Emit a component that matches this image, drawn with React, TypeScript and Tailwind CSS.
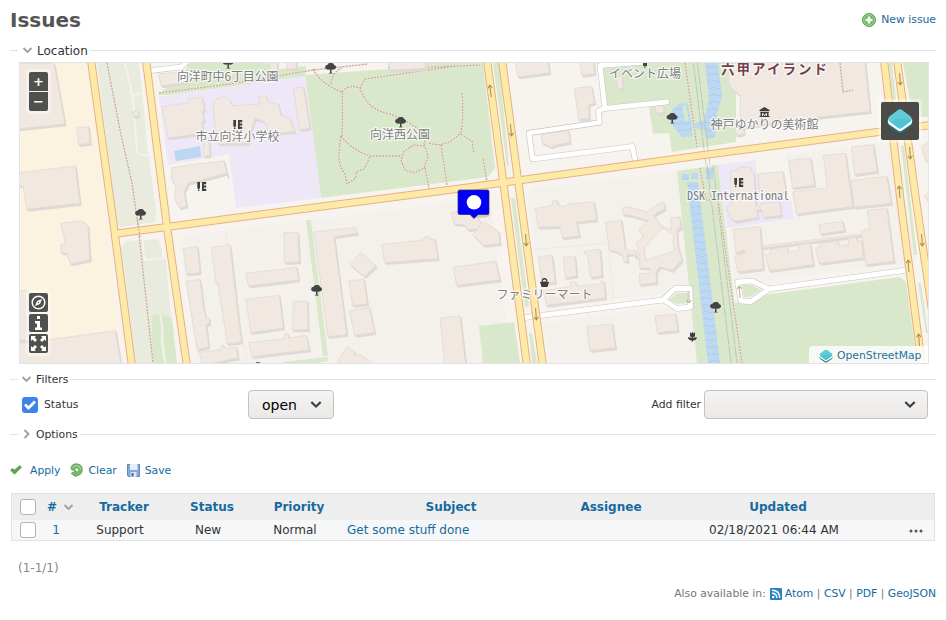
import React from 'react';

type Pt = [number, number];
type TileProps = { x: number; y: number; children: React.ReactNode };

/* Map sheets are drawn on a grid three times finer than the page. */
const Sheet = ({ x, y, children }: TileProps) => (
  <g transform={`translate(${x} ${y}) scale(.333333)`}>{children}</g>
);

const Bld = ({ d }: { d: string }) => (
  <g strokeLinejoin="round">
    <polygon points={d} transform="translate(5 7)" fill="#dfdad5" />
    <polygon points={d} transform="translate(2.5 3.5)" fill="#dfdad5" stroke="#dfdad5" strokeWidth="3" />
    <polygon points={d} fill="#f1e8e2" stroke="#ded7d1" strokeWidth="2" />
  </g>
);

const sheets: { x: number; y: number; b: string[] }[] = [
  {
    x: 0, y: 0, b: [
      '40,190 162,190 195,372 40,388',
      '230,384 266,380 270,430 236,434',
      '40,520 226,498 240,610 80,628 70,560 40,550',
      '398,336 413,332 417,348 402,350',
      '475,222 560,214 566,246 484,258',
      '486,320 566,308 566,296 606,292 614,330 606,335 612,360 606,368 610,400 504,414',
      '610,420 626,420 630,466 612,470',
      '515,502 672,482 684,532 678,520 590,544 566,548 552,576 560,618 540,624 524,598 528,560 515,540',
      '640,310 650,296 672,290 690,300 698,318 780,312 775,290 797,287 804,305 835,312 842,344 870,356 884,395 804,402 800,372 786,362 765,356 756,380 745,430 656,432 642,360',
    ],
  },
  {
    x: 230, y: 55, b: [
      '118,18 140,18 144,44 120,50',
      '168,18 198,18 198,40 172,42',
      '190,100 220,96 240,220 208,224',
      '474,18 586,14 586,40 480,46',
    ],
  },
  {
    x: 460, y: 55, b: [
      '165,18 264,18 268,54 174,66',
      '358,18 400,18 404,56 366,62',
      '343,100 394,94 404,144 386,150 388,190 356,194',
      '244,238 326,226 330,262 290,270 272,276 246,264',
      '468,66 486,62 490,98 474,102',
      '585,153 610,153 612,170 600,176 588,170',
    ],
  },
  {
    x: 690, y: 0, b: [
      '120,190 524,180 540,335 380,352 160,382 162,402 138,406 150,360 152,290 122,262 114,240',
      '297,482 362,474 374,556 308,564',
      '400,466 466,460 488,620 320,642 308,576 412,564',
      '485,440 550,434 562,514 494,524',
      '484,542 590,528 604,610 492,622',
      '203,522 278,514 288,576 210,584',
      '120,514 145,510 148,502 180,502 184,514 192,520 198,618 212,616 212,610 268,606 274,646 220,652 214,628 200,630 204,652 136,664 120,654 110,622 126,610',
      '694,440 712,428 740,428 740,510 706,480',
      '704,588 716,576 716,600 710,600',
    ],
  },
  {
    x: 0, y: 210, b: [
      '182,40 246,32 264,48 270,150 212,162 200,130 184,128 182,104 196,100',
      '40,246 80,240 88,250 88,392 40,390',
      '40,404 346,362 364,470 40,470',
      '550,116 592,110 600,188 560,192',
      '558,214 600,208 612,300 618,324 628,326 628,340 618,344 626,410 592,420',
      '634,112 690,104 716,330 724,396 682,402 654,222 648,218',
      '598,428 662,418 668,404 678,416 710,412 714,444 606,466',
    ],
  },
  {
    x: 230, y: 210, b: [
      '162,68 204,68 208,156 164,158',
      '46,190 200,172 206,210 56,228',
      '48,268 148,256 160,354 62,368',
      '190,274 232,274 234,360 188,360',
      '57,398 162,386 164,372 174,372 176,384 228,376 238,420 66,440',
      '252,66 374,52 382,70 312,80 350,374 294,380',
      '392,128 438,166 404,200 360,164',
      '356,212 402,208 412,282 368,286',
      '358,302 418,292 434,368 374,376',
      '455,104 580,90 584,80 598,80 600,88 614,88 624,146 464,158',
      '352,410 374,424 372,434 382,438 388,432 424,458 400,480 340,480 324,450',
      '630,324 690,318 708,470 645,470',
      '664,8 700,0 744,24 760,54 714,60 700,44 672,42',
    ],
  },
  {
    x: 460, y: 180, b: [
      '38,164 70,124 116,154 120,192 70,196',
      '-20,262 106,244 120,300 -10,316',
      '226,86 276,76 278,62 292,62 294,76 316,80 322,72 402,66 410,120 350,126 358,168 308,174 300,140 234,142',
      '436,126 484,120 496,208 510,212 526,210 530,236 518,222 500,224 504,244 492,244 488,226 468,214 448,210',
      '487,84 505,80 560,96 596,70 612,68 614,86 580,106 606,140 634,148 632,114 658,110 664,142 650,150 654,202 666,240 636,272 600,260 588,276 590,308 540,314 538,282 570,278 568,264 540,264 536,220 530,188 550,170 536,148 566,122 510,106 490,104',
      '235,230 276,226 286,308 246,310',
      '310,232 344,228 350,288 316,294',
      '370,214 420,208 426,288 392,292 382,226',
      '250,332 330,320 332,306 346,306 350,318 418,312 422,304 432,304 436,354 260,376',
      '380,440 456,432 466,504 390,512',
      '585,408 646,402 654,452 592,458',
    ],
  },
  {
    x: 690, y: 200, b: [
      '130,88 210,80 220,206 144,216 134,168 166,160 162,150 138,158',
      '216,138 510,102 510,108 216,144',
      '226,164 240,162 242,148 290,140 294,156 326,152 326,134 360,130 370,194 238,212',
      '376,144 390,142 388,132 442,122 446,136 476,134 474,114 498,110 502,124 516,122 520,174 388,190',
      '386,74 458,64 464,92 392,102',
      '532,32 590,24 612,184 528,194 514,92 540,86',
    ],
  },
];

const blocks = [
  '180,241 186,235 482,199 491,206 512,363 197,363',
  '527,197 532,188 676,172 692,290 545,308',
  '543,323 690,304 700,363 550,363',
  '730,228 797,220 905,195 916,262 740,284 734,282',
  '787,156 897,140 907,210 795,222',
];

const parks = [
  '158,95 167,87 187,68 187,63 272,63 272,70 306,66 306,76 168,95',
  '305,75 388,69 388,63 483,63 495,168 488,177 321,198',
  '603,67 608,63 736,63 736,142 672,152 669,133 653,134 649,107 606,107',
  '677,171 718,165 742,363 697,363',
  '735,303 763,295 900,277 906,282 917,363 740,363',
  '903,63 928,63 928,117 913,117',
  '479,326 514,322 520,363 483,363',
  '493,63 499,63 509,166 507,166',
  '511,198 515,198 529,307 525,307',
  '529,333 532,333 537,363 532,363',
  '889,63 892,63 896,100 893,100',
  '901,146 904,146 917,255 914,255',
  '918,283 921,283 928,333 926,333',
  '306,220 311,220 328,356 323,356',
  '283,362 328,357 328,361 315,363 283,363',
  '152,315 160,314 172,318 177,363 152,363',
];

const greys = [
  '97,63 139,63 148,152 156,209 155,222 121,227 117,223',
  '121,247 126,241 158,239 162,249 162,257 166,260 171,316 176,363 136,363',
];

const mainRoads = [
  'M91 60L113 220L132 366',
  'M146 60L167 227L187 366',
  'M117 233.5L167 227L230 218.5L460 188.5L700 155.5L930 125',
  'M487 60L503 180L527 366',
  'M502 60L518 180L543 366',
  'M884 60L901 205L922 366',
  'M897 60L916 200L932 310',
];

const smallRoads = [
  'M150 70.7L181 67L187 62',
  'M645 62L600 65.5L605 108.5',
  'M667 102L604 108.5L598.5 111L599.5 122.5L529 133L532.5 159L632.5 146.5L635.5 162',
  'M525 317.5L663 300L675 288.5L690 288.5L690.5 307L677 308.5L663.5 300',
  'M907.5 270L769 289L752 281L737.5 282L741 301L751 301.5L769 289',
];

const paths = [
  'M107 63L120 130L132 183L138 225L153 363',
  'M159 93L230 84L313 70L368 64',
  'M313 69Q321 84 342 92Q343 108 342 136',
  'M331 84Q332 72 342 68',
  'M342 92Q348 84 360 88Q367 110 390 114Q409 121 429 137Q422 142 425 146',
  'M360 88L365 79L456 66',
  'M341 136C339 153 336 162 345 174L347 184L356 178L356 172L364 169L370 157',
  'M341 136Q353 151 371 156L401 156',
  'M425 146L414 145L404 151L401 160L405 170L414 173L424 168L428 157L425 146',
  'M425 168L429 188',
  'M429 143Q447 149 461 132Q464 116 462 92',
  'M441 145L447 185',
  'M461 134L472 141L474 154',
  'M483 159L487 182',
  'M389 63L389 69L480 65',
  'M685 63L697 147',
  'M700 168L706 200L718 200L742 363',
  'M840 63L843 92L853 90',
];

const Tree = ({ x, y }: { x: number; y: number }) => (
  <g transform={`translate(${x} ${y})`} fill="#444">
    <path d="M-5.5 -.5Q-5.5 -3-3 -3.2Q-2 -5.5 .5 -5Q3 -5.4 3.7 -3Q6 -2.4 5.5 0Q4 2.3 1 1.6L1 4.5L2.5 5.5H-2L-.5 4.5V1.6Q-4.5 2.2-5.5 -.5Z" />
  </g>
);

const School = ({ x, y }: { x: number; y: number }) => (
  <g transform={`translate(${x} ${y})`} fill="#3d3d3d">
    <path d="M.3 0h2.7v5.300L2.500 7H.8L.3 5.300zM1 7.600h1.400V9H1zM5 0h4.200v2.200H6.800v1.200h2.400v2H6.800v1.300h2.400V9H5z" />
  </g>
);

const Arrow = ({ x, y, r }: { x: number; y: number; r: number }) => (
  <path transform={`translate(${x} ${y}) rotate(${r})`} d="M0 -6V6M-2.2 3L0 6L2.2 3" fill="none" stroke="#a08c58" strokeWidth="1" />
);

const Label = ({ x, y, w, children }: { x: number; y: number; w: number; children: string }) => (
  <text x={x} y={y} textLength={w} fontSize="12" className="font-['Noto_Sans_CJK_JP',sans-serif]" fill="#7d7d7d" stroke="#fff" strokeOpacity=".75" strokeWidth="2.4" strokeLinejoin="round" paintOrder="stroke">
    {children}
  </text>
);

function MapCanvas() {
  const ties: Pt[] = [[693, 60], [697, 60], [711, 200], [717, 200]];
  return (
    <svg width="908" height="300" viewBox="20 63 908 300" className="block">
      <defs>
        <pattern id="waves" width="8" height="7" patternUnits="userSpaceOnUse">
          <rect width="8" height="7" fill="#bdd8f1" />
          <path d="M0 4Q2 2 4 4T8 4" fill="none" stroke="#a9c9e9" strokeWidth=".8" />
        </pattern>
      </defs>
      <rect x="20" y="63" width="908" height="300" fill="#f7f4ef" />
      <polygon points="20,63 87,63 108,225 122,363 20,363" fill="#fbf3e0" />
      {blocks.map((p) => <polygon key={p} points={p} fill="#f4f1ed" />)}
      {greys.map((p) => <polygon key={p} points={p} fill="#e9ebdf" />)}
      {parks.map((p) => <polygon key={p} points={p} fill="#d9e8ca" />)}
      <polygon points="159,97 305,76 321,198 236,208 229,154 213,157 168,165" fill="#eee7f8" />
      <polygon points="718,165 755,160 760,190 791,200 794,219 727,228" fill="#eee7f8" />
      <polygon points="174,151 200,146 201,157 176,161" fill="#bcd7f0" />
      <path d="M125 63L133 98M131 97L141 93M133 98L137 151Q139 156 149 155M160 315Q163 325 162 340L165 363M143 226L143 250L145 260L164 258" fill="none" stroke="#f4f2ea" strokeWidth="2" />
      <path d="M226 232L232 290L248 363M529 250L608 243L614 300M787 156L800 220" fill="none" stroke="#edeae5" strokeWidth="1" />
      <g fill="url(#waves)">
        <polygon points="672,110 680,103 688,104 692,125 692,136 682,137 674,127 669,119" />
        <polygon points="705,63 718,63 722,96 716,117 715,137 706,139 705,130 695,128 695,124 704,120 709,99" />
        <polygon points="687,182 698,182 720,363 708,363" />
        <path d="M682 174h7v6h-7zM691 173h7v6h-7zM706 168h7v11h-7z" />
      </g>
      <path d="M684 106L687 121" stroke="#d9e8ca" strokeWidth="4" />
      {ties.map(([x, y], i) => (
        <path key={i} d={y < 100 ? `M${x} 60L${x + 13} 165` : `M${x - 4} 165L${x + 20} 363`} stroke="#b9bdb3" strokeWidth=".8" strokeDasharray="12 1" fill="none" />
      ))}
      <g fill="none" strokeLinejoin="round">
        {paths.map((d) => <path key={d} d={d} stroke="#f0ebe0" strokeOpacity=".65" strokeWidth="2.2" />)}
        {paths.map((d) => <path key={d} d={d} stroke="#c9a899" strokeWidth="1.3" strokeDasharray="2 1.2" />)}
      </g>
      {sheets.map((s) => (
        <Sheet key={`${s.x}-${s.y}`} x={s.x} y={s.y}>{s.b.map((d) => <Bld key={d} d={d} />)}</Sheet>
      ))}
      <polygon points="644,248 663,228 673,234 674,251 646,260" fill="#f4f1ed" stroke="#ded7d1" strokeWidth=".7" />
      <path d="M840 63L843 92L853 90" fill="none" stroke="#c9a899" strokeWidth="1.3" strokeDasharray="2 1.2" />
      <polygon points="669,300 677,293 687,293 688,303 678,304" fill="#d9e8ca" />
      <polygon points="742,285 752,285 761,290 750,297 744,297" fill="#d9e8ca" />
      <g fill="none" strokeLinejoin="round">
        {smallRoads.map((d) => <path key={d} d={d} stroke="#c9c6c2" strokeWidth="6" strokeLinecap="round" />)}
        {smallRoads.map((d) => <path key={d} d={d} stroke="#fff" strokeWidth="4.8" strokeLinecap="round" />)}
        {mainRoads.map((d) => <path key={d} d={d} stroke="#e7b083" strokeWidth="8.2" />)}
        {mainRoads.map((d) => <path key={d} d={d} stroke="#feeaa8" strokeWidth="6.2" />)}
      </g>
      <path d="M137.5 219L140 238" stroke="#cfab9a" strokeWidth="1.1" strokeDasharray="2 1.3" />
      <Arrow x={490.5} y={91} r={173} /><Arrow x={511} y={130} r={-6} />
      <Arrow x={526} y={240} r={-4} /><Arrow x={536} y={314} r={-4} />
      <Arrow x={900} y={79} r={-4} /><Arrow x={910} y={153} r={-4} />
      <Arrow x={899.5} y={192} r={176} /><Arrow x={922} y={240} r={-4} />
      <Arrow x={908.5} y={266} r={176} /><Arrow x={919} y={340} r={176} />
      <g opacity=".7"><Arrow x={689} y={297} r={0} /><Arrow x={739.5} y={292} r={174} /></g>
      <Tree x={140.5} y={214} /><Tree x={228} y={63} /><Tree x={330.5} y={68} /><Tree x={400.5} y={122} />
      <Tree x={672} y={118} /><Tree x={316.5} y={290} /><Tree x={715.5} y={307} />
      <path d="M643 63h4v3h-1.5v2h-1v-2H643zM256 362.3h4v1h-4z" fill="#444" />
      <School x={233} y={120} /><School x={197} y={182} /><School x={734} y={178} />
      <path d="M540 282h1.500q0-4 3-4t3 4h1.500v1.200h-.6l-.8 3.800h-6.200l-.8-3.800h-.6zM542.500 281.500h4q-.4-2.100-2-2.100t-2 2.100z" fill="#3d3d3d" />
      <path d="M764.500 107L769.500 110V111H759.500V110ZM760 111.800H769V112.600H760ZM760.500 112.600H768.500V116H769.500V117H759.500V116H760.500ZM762 116H763V114.600L764.500 116L766 114.600V116H767V113.300H766L764.500 114.700L763 113.300H762Z" fillRule="evenodd" fill="#3d3d3d" />
      <path d="M690 332l1.200 1.500L692.500 332l1.300 1.500L695 332v3.500q0 1.500-1.800 1.800v1q1.500-1.600 3.800-.8q-.8 3-3.800 2.800V341.500h-1.600v-1.200q-3 .2-3.800-2.800q2.300-.8 3.800.8v-1Q690 337 690 335.500z" fill="#3d3d3d" />
      <Label x={177} y={80.5} w={101.500}>向洋町中6丁目公園</Label>
      <Label x={195.5} y={141} w={84}>市立向洋小学校</Label>
      <Label x={370} y={138.5} w={60}>向洋西公園</Label>
      <Label x={609} y={78} w={72}>イベント広場</Label>
      <Label x={710.5} y={129} w={108}>神戸ゆかりの美術館</Label>
      <Label x={496.5} y={299} w={96}>ファミリーマート</Label>
      <text x="687" y="199.500" textLength="102" lengthAdjust="spacingAndGlyphs" fontSize="12" className="font-['Noto_Sans_Mono_CJK_JP','DejaVu_Sans_Mono',monospace]" fill="#7d7d7d" stroke="#fff" strokeOpacity=".75" strokeWidth="2.4" paintOrder="stroke">DSK International</text>
      <text x="721" y="74" textLength="106" fontSize="13.500" fontWeight="700" className="font-['Noto_Sans_CJK_JP',sans-serif]" fill="#71404c" stroke="#fff" strokeOpacity=".75" strokeWidth="2.400" paintOrder="stroke">六甲アイランド</text>
      <ellipse cx="481" cy="215" rx="9" ry="3" fill="#000" opacity=".15" />
      <path d="M460 190H487.500Q489 190 489 191.500V213Q489 214.500 487.500 214.500H478L474 218.500L470 214.500H460Q458 214.500 458 213V191.500Q458 190 460 190Z" fill="#0000fa" stroke="#28285a" strokeWidth=".7" />
      <circle cx="474" cy="202.300" r="7.300" fill="#fff" />
    </svg>
  );
}

const Layers = ({ size }: { size: number }) => (
  <svg width={size} height={size} viewBox="0 0 26 26">
    <path d="M1 14Q0 17 3 19L11 24.5Q13 26 15 24.5L23 19Q26 17 25 14Z" fill="#247181" />
    <path d="M1 11Q0 15 3 17L11 22.5Q13 24 15 22.5L23 17Q26 15 25 11Z" fill="#fff" />
    <path d="M11 2Q13 .5 15 2L23.5 8.5Q26 11 23.5 13.5L15 20Q13 21.5 11 20L2.500 13.500Q0 11 2.500 8.500Z" fill="#50c3d3" />
    <path d="M11 2Q13 .5 15 2L23.5 8.5Q25 10 24 12Q14 8 3 14Q0 11 2.500 8.500Z" fill="#73d1dd" opacity=".55" />
  </svg>
);

const Chevron = ({ right, dark }: { right?: boolean; dark?: boolean }) => (
  <svg width="12" height="12" viewBox="0 0 12 12" fill="none" stroke={dark ? '#3a3f42' : '#a0a0a0'} strokeWidth={dark ? 2.2 : 1.9}>
    <path d={right ? 'M3.500 2L7.500 6L3.500 10' : dark ? 'M1.300 3L6 7.500L10.700 3' : 'M1.500 4L5.500 8L9.500 4'} />
  </svg>
);

const Legend = ({ text, right, big }: { text: string; right?: boolean; big?: boolean }) => (
  <div className="flex h-5 items-center">
    <span className="h-px w-2 bg-[#e0e2e3]" />
    <span className={big ? 'ml-[3.5px] flex' : 'ml-[3px] flex'}><Chevron right={right} /></span>
    <span className={big ? 'ml-[3.5px] mr-[2px] pt-px text-[12px]' : 'ml-[3px] mr-[2px] pt-[2px] text-[10.8px]'}>{text}</span>
    <span className="h-px flex-1 bg-[#e0e2e3]" />
  </div>
);

const ctl = 'flex w-[19px] items-center justify-center bg-[#50504c] text-white';
const link = 'text-[#156a9f]';
const cols = 'grid grid-cols-[32px_35px_90px_86px_88px_216px_104px_230px_1fr] items-center';
const selectBox = 'flex h-[29px] items-center rounded-[4px] border border-[#c5c1bc] bg-linear-to-b from-[#f5f4f3] to-[#ebe9e7]';

const Box = () => <span className="ml-2 block h-4 w-4 rounded-[3px] border border-[#b8b0a6] bg-white" />;

export default function App() {
  return (
    <div className="flex h-[620px] w-[947px] flex-col border-r border-[#dddddd] bg-white pl-[10px] pr-[10px] font-['DejaVu_Sans',sans-serif] text-[12px] leading-none text-[#333]">
      <header className="flex h-10 items-center justify-between">
        <h2 className="text-[20px] font-bold text-[#555]">Issues</h2>
        <a className={`flex items-center gap-[5px] text-[10.8px] ${link}`}>
          <svg width="14" height="14" viewBox="0 0 14 14">
            <circle cx="7" cy="7" r="6.500" fill="#69b55a" stroke="#438b3d" strokeWidth=".8" />
            <circle cx="7" cy="7" r="5.300" fill="none" stroke="#b8dfa9" strokeWidth=".8" />
            <path d="M5.700 3.500h2.600v2.200h2.200v2.600H8.300v2.200H5.700V8.300H3.500V5.700h2.200z" fill="#fff" />
          </svg>
          New issue
        </a>
      </header>
      <Legend text="Location" big />
      <div className="relative ml-[9px] mt-[2px] h-[302px] w-[910px] border border-[#e0e2e3]">
        <MapCanvas />
        <div className="absolute left-[6px] top-[6px] flex flex-col gap-px rounded-[4px] bg-white/40 p-[3px]">
          <span className={`${ctl} h-[19px] rounded-t-[2px] text-[13px] font-bold`}>+</span>
          <span className={`${ctl} h-[19px] rounded-b-[2px] text-[13px] font-bold`}>−</span>
        </div>
        <div className="absolute bottom-[7px] left-[6px] flex flex-col gap-[2px] rounded-[4px] bg-white/40 p-[3px]">
          <span className={`${ctl} h-[19px] rounded-[2px]`}>
            <svg width="15" height="15" viewBox="0 0 15 15"><circle cx="7.500" cy="7.500" r="6.300" fill="none" stroke="#fff" strokeWidth="1.500" /><path d="M11 4L9 9L4 11L6 6ZM6.700 7.500L7.500 8.300L8.300 7.500L7.500 6.700Z" fillRule="evenodd" fill="#fff" /></svg>
          </span>
          <span className={`${ctl} h-[18px] rounded-[2px]`}>
            <svg width="9" height="14" viewBox="0 0 9 14"><path d="M3 0h3v3H3zM1 5h5v6.500h2V14H1v-2.500h2v-4H1z" fill="#fff" /></svg>
          </span>
          <span className={`${ctl} h-[19px] rounded-[2px]`}>
            <svg width="15" height="15" viewBox="0 0 15 15" fill="#fff"><path d="M0 0h5L3.600 1.500L6 4L4 6L1.500 3.600L0 5zM15 0v5l-1.500-1.400L11 6L9 4l2.500-2.500L10 0zM0 15v-5l1.500 1.400L4 9l2 2l-2.500 2.500L5 15zM15 15h-5l1.500-1.400L9 11l2-2l2.500 2.500L15 10z" /></svg>
          </span>
        </div>
        <div className="absolute right-[6px] top-[36px] rounded-[4px] bg-white/40 p-[3px]">
          <div className="flex h-[38px] w-[38px] items-center justify-center rounded-[2px] bg-[#4a4a47]"><Layers size={26} /></div>
        </div>
        <div className="absolute bottom-0 right-0 flex h-[17px] w-[119px] items-center gap-[4px] rounded-tl-[4px] bg-white/80 pl-[10px] pt-[3px] text-[10.8px] text-[#2a6f9e]">
          <Layers size={14} /><span className="pt-px">OpenStreetMap</span>
        </div>
      </div>
      <div className="mt-[5px]"><Legend text="Filters" /></div>
      <div className="mt-[1px] flex h-[29px] items-center text-[10.8px]">
        <span className="ml-3 flex h-4 w-4 items-center justify-center rounded-[3px] bg-[#3d86e6]">
          <svg width="12" height="10" viewBox="0 0 12 10" fill="none" stroke="#fff" strokeWidth="2.800"><path d="M1 4.500L4.500 8L11 1.500" /></svg>
        </span>
        <span className="ml-[6px] w-[204px] pt-px">Status</span>
        <span className={`${selectBox} w-[86px] justify-between pl-[13px] pr-[11px] text-[14px] text-black`}>open<Chevron dark /></span>
        <span className="ml-auto mr-[3px] pt-px">Add filter</span>
        <span className={`${selectBox} mr-2 w-[224px] justify-end pr-[11px]`}><Chevron dark /></span>
      </div>
      <div className="mt-[5px]"><Legend text="Options" right /></div>
      <div className={`mt-[16px] flex h-5 items-center text-[10.8px] ${link}`}>
        <svg width="12" height="10" viewBox="0 0 12 10"><path d="M.5 5L2.500 3.500L4.500 5L9.500 .8L11.500 2.300L4.500 9.300Z" fill="#58aa4c" stroke="#3f8f3a" strokeWidth=".6" /></svg>
        <span className="ml-2 pt-[2px]">Apply</span>
        <svg className="ml-[10px]" width="13" height="14" viewBox="0 0 13 14"><path d="M1 5.300Q1.300 .8 6.500 .8Q12.400 1.200 12.300 7Q12 12.300 6 12.700V13.700L1.200 10.500L6 7.600V9.200Q8.800 9 8.800 6.800Q8.700 4.900 6.500 4.800Q4.700 5 4.600 7.200H2.800Q1 7 1 5.300Z" fill="#7dbb70" stroke="#468b40" strokeWidth=".7" /><path d="M3 4.500Q4 2.200 7 2.500Q10.500 3 10.700 6.500" fill="none" stroke="#b4dba9" strokeWidth=".9" /></svg>
        <span className="ml-[5px] pt-[2px]">Clear</span>
        <svg className="ml-[10px]" width="13" height="13" viewBox="0 0 13 13"><path d="M.5 .5h12v12h-11l-1-1z" fill="#83a9da" stroke="#6088c0" /><path d="M3 0h7.500v6H3z" fill="#e7eef7" /><path d="M3.500 8h6v5h-6z" fill="#dce4ee" /><path d="M4.500 9h2v3.500h-2z" fill="#426ca5" /></svg>
        <span className="ml-[5px] pt-[2px]">Save</span>
      </div>
      <div className="ml-[1px] mt-[13px] h-[48px] w-[924px] border border-[#dfe1e2]">
        <div className={`${cols} h-[26px] bg-[#eeeeee] text-center font-bold ${link}`}>
          <Box />
          <span className="flex items-center gap-[6px] pl-[3px]">#<Chevron /></span>
          <span>Tracker</span><span>Status</span><span>Priority</span><span>Subject</span><span>Assignee</span><span>Updated</span>
        </div>
        <div className={`${cols} h-5 bg-[#f6f7f9] text-center`}>
          <Box />
          <span className={`pr-[11px] ${link}`}>1</span>
          <span className="pr-2">Support</span><span className="pr-2">New</span><span className="pr-2">Normal</span>
          <span className={`pl-1 text-left ${link}`}>Get some stuff done</span><span />
          <span className="pr-2">02/18/2021 06:44 AM</span>
          <span className="flex justify-end pr-[11px] pt-[2px]">
            <svg width="14" height="4" viewBox="0 0 14 4" fill="#555"><circle cx="2" cy="2" r="1.500" /><circle cx="7" cy="2" r="1.500" /><circle cx="12" cy="2" r="1.500" /></svg>
          </span>
        </div>
      </div>
      <div className="ml-2 mt-[21px] h-[13px] text-[12px] text-[#888]">(1-1/1)</div>
      <footer className="mt-[12px] flex h-[14px] items-center justify-end whitespace-pre text-[10.8px] text-[#777]">
        <span>Also available in:</span>
        <svg className="ml-[4px] mr-[3px]" width="12" height="12" viewBox="0 0 12 12"><rect width="12" height="12" rx="1" fill="#2784bf" /><circle cx="3.200" cy="9" r="1.200" fill="#fff" /><path d="M2 5.200Q6.800 5.200 6.800 10M2 2.300Q9.700 2.300 9.700 10" fill="none" stroke="#fff" strokeWidth="1.400" /></svg>
        <a className={link}>Atom</a> | <a className={link}>CSV</a> | <a className={link}>PDF</a> | <a className={link}>GeoJSON</a>
      </footer>
    </div>
  );
}
